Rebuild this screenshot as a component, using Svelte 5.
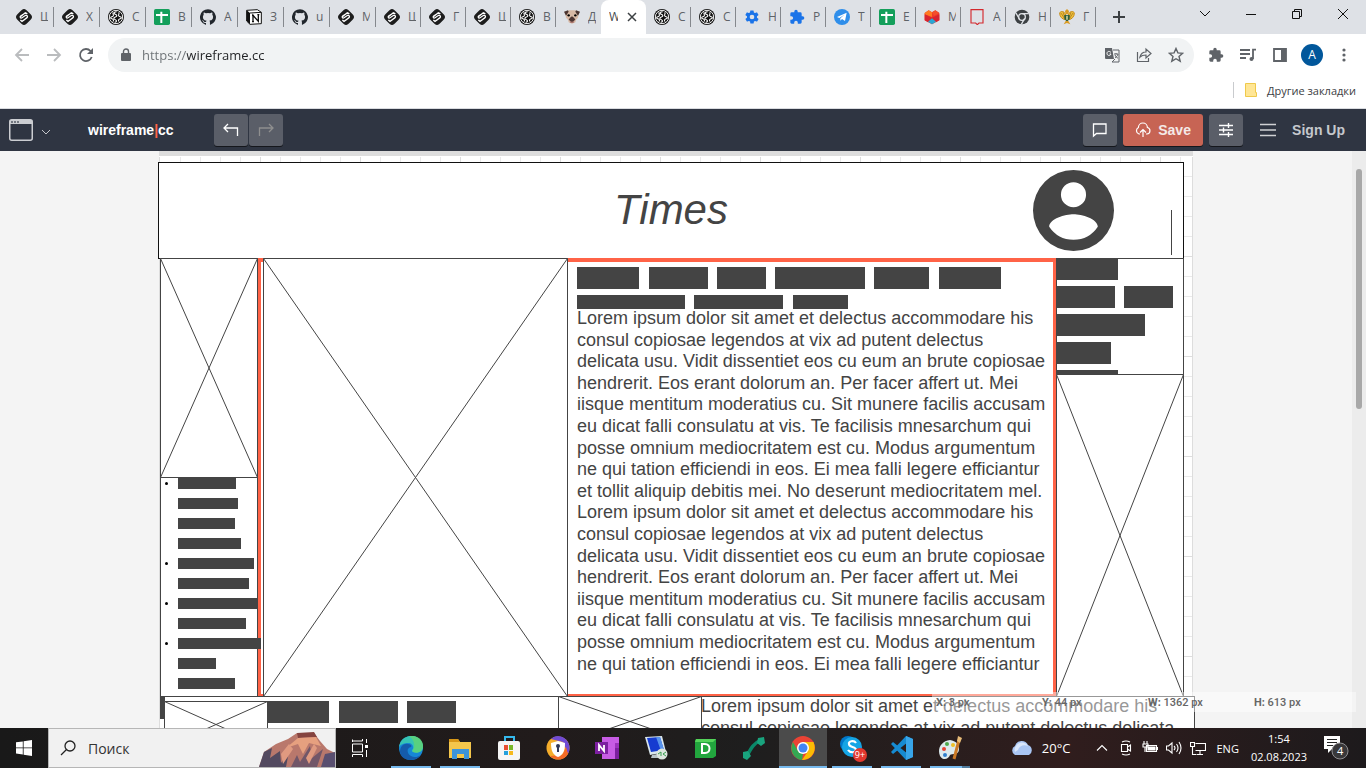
<script>
  const glyphs = {
    s: '<rect x="2" y="2" width="20" height="20" rx="6" transform="rotate(45 12 12)" fill="#1d1d1d"/><path d="M17 7.500l-2.500-2L7 10.500c-1.500 1.500-.5 3.500 1.500 3l6-4c2.500-.5 3.500 2 2 3.500l-7.500 5.500L6.500 16.500M6 12l8-6.500M9.500 18.500l8-6.500" fill="none" stroke="#fff" stroke-width="1.900"/>',
    brain: '<circle cx="12" cy="12" r="12" fill="#111"/><circle cx="12" cy="12" r="10" fill="none" stroke="#fff" stroke-width="1.400"/><path d="M13 4c-4 0-5 3-2 4s3 3 0 4-3 3 0 4 2 4-1 4M8 5c-2 2 1 3 0 5s-4 1-4 3 3 1 4 3-1 2 0 3M16 5c2 2-1 3 0 5s4 1 4 3-3 1-4 3 1 2 0 3" fill="none" stroke="#fff" stroke-width="1.600"/>',
    sheet: '<rect width="24" height="24" rx="2.500" fill="#149f5b"/><path d="M3 9h18M11 4v17" stroke="#fff" stroke-width="3"/>',
    git: '<path fill="#22272d" d="M12 .3a12 12 0 0 0-3.800 23.400c.6.100.8-.3.800-.6v-2.200c-3.300.7-4-1.400-4-1.400-.6-1.400-1.400-1.800-1.400-1.800-1-.7.100-.7.100-.7 1.200.100 1.900 1.200 1.900 1.200 1 1.800 2.800 1.300 3.500 1 .1-.8.400-1.300.8-1.600-2.700-.3-5.500-1.300-5.500-5.900 0-1.300.5-2.400 1.200-3.200-.1-.3-.5-1.500.100-3.200 0 0 1-.3 3.300 1.200a11.500 11.500 0 0 1 6 0c2.300-1.500 3.300-1.200 3.300-1.200.7 1.700.2 2.900.1 3.200.8.8 1.200 1.900 1.200 3.200 0 4.600-2.800 5.600-5.500 5.900.4.400.8 1.100.8 2.200v3.300c0 .3.200.7.800.6A12 12 0 0 0 12 .3"/>',
    notion: '<path d="M1 2l16-1 6 4v17l-17 1-5-5z" fill="#fff" stroke="#111" stroke-width="1.500"/><path d="M1 2l5 4v17l-5-5z" fill="#111"/><path d="M6 6l17-1" stroke="#111" stroke-width="1.500"/><path d="M10.500 19V9.500l8 9V8.500M9 9.500h3M17 8.500h3M9 19h3" fill="none" stroke="#111" stroke-width="2"/>',
    pug: '<path d="M2 4l6-2h8l6 2-1 9-3 3-1 4-5 2-5-2-1-4-3-3z" fill="#d7b9a5"/><path d="M0 4l6-2 1 2-4 6zM24 4l-6-2-1 2 4 6z" fill="#4b342f"/><path d="M9 13l3-2 3 2 2 3-5 4-5-4z" fill="#4d3633"/><circle cx="7" cy="9.500" r="1.800"/><circle cx="17" cy="9.500" r="1.800"/><path d="M9 19q3 2 6 0" stroke="#ad7770" stroke-width="2"/>',
    gear: '<path fill="#1a73e8" d="M19.400 13c.1-.3.100-.7.100-1s0-.7-.1-1l2.100-1.600c.2-.1.200-.4.100-.6l-2-3.500c-.1-.2-.4-.3-.6-.2l-2.500 1a7 7 0 0 0-1.700-1l-.4-2.600a.5.5 0 0 0-.5-.4h-4c-.2 0-.4.2-.5.400L9 5.100a7 7 0 0 0-1.700 1l-2.500-1c-.2-.1-.5 0-.6.200l-2 3.500c-.1.200 0 .5.1.6L4.500 11a8 8 0 0 0 0 2l-2.100 1.600c-.2.1-.2.400-.1.600l2 3.500c.1.200.4.300.6.200l2.500-1q.8.600 1.700 1l.4 2.600c.1.200.3.400.5.400h4c.2 0 .4-.2.500-.4l.4-2.600q.9-.4 1.700-1l2.500 1c.2.100.5 0 .6-.2l2-3.500c.1-.2.100-.5-.1-.6zM12 15.500a3.500 3.500 0 1 1 0-7 3.500 3.500 0 0 1 0 7"/>',
    puzzleBlue: '<path fill="#1a73e8" d="M20.500 11H19V7a2 2 0 0 0-2-2h-4V3.500a2.500 2.500 0 0 0-5 0V5H4a2 2 0 0 0-2 2v3.800h1.500a2.700 2.700 0 0 1 0 5.400H2V20c0 1.100.9 2 2 2h3.800v-1.500a2.700 2.700 0 0 1 5.400 0V22H17a2 2 0 0 0 2-2v-4h1.500a2.500 2.500 0 0 0 0-5"/>',
    telegram: '<circle cx="12" cy="12" r="12" fill="#2f8eea"/><path d="M4.500 12L19 5.500 16.500 18l-4.500-3-2.500 2.500V14l6-5.500-7.500 5z" fill="#fff"/>',
    mcube: '<path d="M1 6l6-4 5 3 5-3 6 4v11l-11 6-11-6z" fill="#ef3b28"/><path d="M1 6l6-4 5 3v7L1 8z" fill="#ff7a21"/><path d="M23 6l-6-4-5 3 3 5z" fill="#f3502c"/><path d="M1 8l11 5L23 8v9l-5 3-6-5-6 5-5-3z" fill="#d9242f"/><path d="M6 19l6-5 6 5-6 4z" fill="#2ba7d4"/>',
    bubbleRed: '<path d="M3 1h18v20h-6l-2.500 2.500L10 21H3z" fill="none" stroke="#d3282d" stroke-width="1.700"/>',
    chromeGray: '<circle cx="12" cy="12" r="11" fill="#3c4043"/><circle cx="12" cy="12" r="5" fill="#3c4043" stroke="#dee1e6" stroke-width="2"/><path d="M12 7h10M8 15L3 6M16 14l-5 9" stroke="#dee1e6" stroke-width="2"/>',
    eagle: '<path d="M10 9C8 2 2 3 1 6c0 6 4 9 8 10M14 9c2-7 8-6 9-3 0 6-4 9-8 10" fill="#f0c33d" stroke="#c58a1a" stroke-width="1.500"/><path d="M3 6l5 8M6 5l3 8M21 6l-5 8M18 5l-3 8" stroke="#9d6a17"/><path d="M9 3l3-3 3 3-1 5h-4z" fill="#d99a22"/><path d="M8 9h8v6l-4 4-4-4z" fill="#2b5d3c"/><path d="M12 10v6" stroke="#f4e9ac" stroke-width="2"/><path d="M10 18l-3 5 5-2 5 2-3-5z" fill="#d99a22"/>'
  };
  const tabs = [
    ['s','Ш'],['s','Х'],['brain','С'],['sheet','В'],['git','А'],['notion','З'],['git','u'],['s','М'],['s','Ш'],['s','Г'],['s','Ш'],['brain','В'],['pug','Д'],
    ['active','W'],['brain','С'],['brain','С'],['gear','Н'],['puzzleBlue','Р'],['telegram','Т'],['sheet','Е'],['mcube','М'],['bubbleRed','А'],['chromeGray','Н'],['eagle','Г']
  ];
  const lorem = [
    'Lorem ipsum dolor sit amet et delectus accommodare his','consul copiosae legendos at vix ad putent delectus','delicata usu. Vidit dissentiet eos cu eum an brute copiosae','hendrerit. Eos erant dolorum an. Per facer affert ut. Mei','iisque mentitum moderatius cu. Sit munere facilis accusam','eu dicat falli consulatu at vis. Te facilisis mnesarchum qui','posse omnium mediocritatem est cu. Modus argumentum','ne qui tation efficiendi in eos. Ei mea falli legere efficiantur','et tollit aliquip debitis mei. No deserunt mediocritatem mel.'
  ];
  const article = [...lorem, ...lorem.slice(0, 8)];
  // Canvas items: x, y, width, height relative to the drawing page.
  const headBars = [[418,116,62,22],[490,116,59,22],[558,116,49,22],[616,116,90,22],[715,116,55,22],[780,116,62,22],[418,144,108,14],[535,144,89,14],[634,144,55,14]];
  const sideBars = [[898,108,61,21],[898,135,58,22],[965,135,49,22],[898,163,88,22],[898,191,54,22],[898,219,61,5]];
  const listBars = [58,60,57,63,76,71,80,68,83,38,57];
  const lowBars = [[108,550,62,22],[180,550,59,22],[248,550,49,22]];
  const apps = [
    ['Edge','on','<circle cx="12" cy="12" r="12" fill="#1687d6"/><path d="M0 11C2-3 21-4 24 9c1 7-5 9-10 7-2-1-1-2 0-3 1-3-1-6-5-6-4 0-7 1-9 4" fill="#36c4b4"/><path d="M14 0c7 1 10 5 10 10 0 6-6 8-10 6-1-1 0-2 1-4 1-5-1-9-5-12z" fill="#67d76a" opacity=".7"/><path d="M1 16c0-6 4-9 8-8 3 0 4 2 3 3-5 1-4 7 0 9 3 2 7 1 10-1-6 8-20 6-21-3" fill="#155bab"/>'],
    ['Explorer','on','<path d="M1 3h9l2 3h11v16H1z" fill="#f4c64b"/><path d="M1 3h9l2 3H1z" fill="#d89717"/><path d="M4 13h17v10h-5v-5H9v5H4z" fill="#3d94da"/>'],
    ['Store','','<path d="M8 6V1h9v5" fill="none" stroke="#35b9ed" stroke-width="2"/><rect x="1" y="5" width="22" height="19" rx="2" fill="#f5f5f5"/><path fill="#e84e30" d="M7 9h4v5H7z"/><path fill="#77b82a" d="M12 9h4v5h-4z"/><path fill="#25a0dc" d="M7 15h4v4H7z"/><path fill="#f6b91c" d="M12 15h4v4h-4z"/>'],
    ['Vault','','<circle cx="12" cy="12" r="11.500" fill="#f5ad2b"/><path d="M12 0a12 12 0 0 1 10 18L17 6 5 3c2-2 4-3 7-3" fill="#704bd3"/><path d="M22 18c-4 7-13 7-18 2l12-1 4-8z" fill="#f46b27"/><path d="M5 7l7-2 7 2c0 8-2 12-7 14-5-2-7-6-7-14" fill="#fff"/><circle cx="12" cy="10" r="2" fill="#303758"/><path d="M12 10v6" stroke="#303758" stroke-width="2"/>'],
    ['OneNote','','<path fill="#c75ce5" d="M7 1h17v22H7z"/><path fill="#9b32bd" d="M20 7h4v5h-4z"/><path fill="#7c1fa0" d="M20 12h4v11h-4zM0 6h13v12H0z"/><path d="M4 15V9l5 6V9" fill="none" stroke="#fff" stroke-width="1.800"/>'],
    ['Remote Desktop','','<path d="M1 1l17-1 4 16-16 3z" fill="#d9e6ed"/><path d="M3 2l13-1 4 13-13 2z" fill="#163cd0"/><path d="M12 1l4 0 4 13-3 1z" fill="#5793ec"/><path d="M8 19l6-1 2 4H7z" fill="#b9c4c9"/><circle cx="18" cy="18" r="5.500" fill="#dce5df"/><path d="M14 18l3-2v4M22 16l-3 2 3 2" stroke="#3b9f51" fill="none"/>'],
    ['Database','','<path d="M3 3h20v17l-3 2H2V5z" fill="#22a63e"/><path d="M3 3h20l-3 3H2z" fill="#54d45a"/><path d="M9 8v9h3c6 0 6-9 0-9z" fill="none" stroke="#fff" stroke-width="2"/>'],
    ['Phone','','<path d="M19 4C12 7 9 12 5 20" fill="none" stroke="#0b8869" stroke-width="3.500"/><path d="M16 2l6-1 1 6-4 3-4-3zM1 16l5-1 3 5-4 4-4-2z" fill="#19a47e"/>'],
    ['Chrome','on selected','<circle cx="12" cy="12" r="12" fill="#ea4335"/><path d="M2 6l5 9 5 3-1 6A12 12 0 0 1 2 6" fill="#34a853"/><path d="M12 6h10.500c4 9-2 18-11.500 18l6-9z" fill="#fbbc04"/><circle cx="12" cy="12" r="6" fill="#fff"/><circle cx="12" cy="12" r="4.500" fill="#4285f4"/>'],
    ['Skype','on','<circle cx="8" cy="8" r="8" fill="#0078ca"/><circle cx="12" cy="11" r="10" fill="#15a5e5"/><path d="M16 7c-2-3-8-2-7 1 0 4 7 2 7 6 0 3-6 3-8 0" fill="none" stroke="#fff" stroke-width="2.200"/>'],
    ['Code','on','<path d="M17 0l7 3v18l-7 3L2 8l2-2 15 12V6L4 18l-2-2z" fill="#168bd2"/><path d="M17 0l7 3v18l-7 3z" fill="#38a5e9"/>'],
    ['Paint','on multi','<path d="M12 4C3 5-1 13 2 20c4 6 9 2 10-1 2-2 9 1 9-6 0-5-3-8-9-9" fill="#dce9ed"/><circle cx="6" cy="13" r="2" fill="#e64234"/><circle cx="9" cy="8" r="2" fill="#4ea84d"/><circle cx="15" cy="9" r="2" fill="#eebf26"/><circle cx="7" cy="19" r="2" fill="#307ecb"/><path d="M16 23L21 4" stroke="#cb7925" stroke-width="3"/><path d="M19 5l1-5 4 2-2 5z" fill="#e9bd79"/>']
  ];
  const stats = [['X:','3 px'],['Y:','44 px'],['W:','1362 px'],['H:','613 px']];
  const box = ([x, y, w, h]) => `left:${x}px;top:${y}px;width:${w}px;height:${h}px`;
</script>

{#snippet cross(rect)}
  <svg class="cross" style={box(rect)} viewBox="0 0 {rect[2]} {rect[3]}"><path d="M.5 .5H{rect[2] - .5}V{rect[3] - .5}H.5ZL{rect[2] - .5} {rect[3] - .5}M{rect[2] - .5} .5L.5 {rect[3] - .5}" /></svg>
{/snippet}

<div class="screen">
  <header class="tabstrip">
    <nav class="tabs" aria-label="Tabs">
      {#each tabs as [icon, label], i}
        <button class="tab" class:wide={i < 8} class:active={icon === 'active'} class:plain={i === 12}>
          {#if icon === 'active'}
            <span class="letter">{label}</span><svg class="x" viewBox="0 0 10 10"><path d="M1 1l8 8M9 1L1 9" /></svg>
          {:else}
            <svg class="fav" viewBox="0 0 24 24">{@html glyphs[icon]}</svg><span class="letter">{label}</span>
          {/if}
        </button>
      {/each}
      <button class="newtab" aria-label="New tab"><svg viewBox="0 0 12 12"><path d="M6 0v12M0 6h12" /></svg></button>
    </nav>
    <div class="winbtns">
      <button aria-label="Search tabs"><svg viewBox="0 0 12 12"><path d="M1 3l5 5 5-5" /></svg></button>
      <button aria-label="Minimize"><svg viewBox="0 0 12 12"><path d="M1 6.500h10" /></svg></button>
      <button aria-label="Restore"><svg viewBox="0 0 12 12"><path d="M1.500 3.500h7v7h-7zM3.500 3.500v-2h7v7h-2" /></svg></button>
      <button aria-label="Close"><svg viewBox="0 0 12 12"><path d="M1 1l10 10M11 1L1 11" /></svg></button>
    </div>
  </header>

  <div class="toolbar">
    <button class="tool off" aria-label="Back"><svg viewBox="0 0 16 16"><path d="M15 8H2M8 2L2 8l6 6" /></svg></button>
    <button class="tool off" aria-label="Forward"><svg viewBox="0 0 16 16"><path d="M1 8h13M8 2l6 6-6 6" /></svg></button>
    <button class="tool reload" aria-label="Reload"><svg viewBox="0 0 16 16"><path d="M13.700 10A6 6 0 1 1 12.500 4L13.500 5" /><path d="M15 1v6H9z" fill="#5f6368" stroke="none" /></svg></button>
    <div class="omni">
      <svg class="lock" viewBox="0 0 10 14"><path d="M1 5h8a1 1 0 0 1 1 1v6a1 1 0 0 1-1 1H1a1 1 0 0 1-1-1V6a1 1 0 0 1 1-1" fill="#5f6368" /><path d="M2.500 6V3.500a2.500 2.500 0 0 1 5 0V6" fill="none" stroke="#5f6368" stroke-width="1.400" /></svg>
      <input class="url" aria-label="Address" value="https://wireframe.cc" />
      <button class="tool" aria-label="Translate"><svg viewBox="0 0 16 16"><path d="M1 1h7l2 11H2a1 1 0 0 1-1-1z" fill="#5f6368" stroke="none" /><path d="M9 3h6v12H8l3-3M10 7h4M12 6v1M14 7c0 2-2 3-3 4M11 8c1 2 2 3 3 3" stroke-width="1" /><path d="M7 5.500c-2-2-4-1-4 1s3 3 4 .5H5.500" stroke="#fff" stroke-width="1" /></svg></button>
      <button class="tool" aria-label="Share"><svg viewBox="0 0 16 16"><path d="M1.500 5v9.500h11V11M4 10c1-4 3-5 6-5V2l5 4.500-5 4.500V8c-3 0-5 1-6 2z" stroke-width="1.200" /></svg></button>
      <button class="tool" aria-label="Bookmark"><svg viewBox="0 0 16 16"><path d="M8 1.500l1.900 4.400 4.800.4-3.700 3.200 1.200 4.700L8 11.700l-4.200 2.500L5 9.500 1.300 6.300l4.800-.4z" stroke-width="1.400" /></svg></button>
    </div>
    <button class="tool" aria-label="Extensions"><svg viewBox="0 0 24 24"><path fill="#5f6368" stroke="none" d="M20.500 11H19V7a2 2 0 0 0-2-2h-4V3.500a2.500 2.500 0 0 0-5 0V5H4a2 2 0 0 0-2 2v3.800h1.500a2.700 2.700 0 0 1 0 5.400H2V20c0 1.100.9 2 2 2h3.800v-1.500a2.700 2.700 0 0 1 5.400 0V22H17a2 2 0 0 0 2-2v-4h1.500a2.500 2.500 0 0 0 0-5" /></svg></button>
    <button class="tool" aria-label="Media"><svg viewBox="0 0 16 16"><path d="M0 3h10M0 7h10M0 11h6M13 12V2.700h3" /><circle cx="11.500" cy="12" r="2" fill="#5f6368" stroke="none" /></svg></button>
    <button class="tool" aria-label="Side panel"><svg viewBox="0 0 16 16"><path d="M2 2h12v12H2z" /><path d="M9 2h5v12H9z" fill="#5f6368" stroke="none" /></svg></button>
    <button class="tool" aria-label="Profile"><span class="avatar">A</span></button>
    <button class="tool" aria-label="Menu"><svg viewBox="0 0 16 16"><g fill="#5f6368" stroke="none"><circle cx="8" cy="3" r="1.600" /><circle cx="8" cy="8" r="1.600" /><circle cx="8" cy="13" r="1.600" /></g></svg></button>
  </div>
  <div class="bookmarks"><button><svg viewBox="0 0 12 14"><path d="M.5 .5h10v9h1v4h-11z" fill="#ffe695" stroke="#efc94b" /></svg>Другие закладки</button></div>

  <div class="appbar">
    <button class="frame" aria-label="Frame size"><svg class="win" viewBox="0 0 24 22"><rect x=".75" y=".75" width="22.500" height="20.500" rx="2" fill="none" stroke="#cbcdd1" stroke-width="1.500" /><path d="M1 1h22v4H1z" fill="#cbcdd1" /><path d="M2 3h8" stroke="#555b66" stroke-width="1.500" stroke-dasharray="2 1" /></svg><svg class="caret" viewBox="0 0 10 6"><path d="M1 1l4 4 4-4" fill="none" stroke="#c5c7cb" /></svg></button>
    <a class="brand" href="#home">wireframe<i>|</i>cc</a>
    <div class="history">
      <button class="dark" aria-label="Undo"><svg viewBox="0 0 16 14"><path d="M5 1L1 5l4 4M1 5h13.500v8" fill="none" stroke="#fff" stroke-width="1.300" /></svg></button>
      <button class="dark faded" aria-label="Redo"><svg viewBox="0 0 16 14"><path d="M11 1l4 4-4 4M15 5H1.500v8" fill="none" stroke="#8f8f8f" stroke-width="1.300" /></svg></button>
    </div>
    <div class="actions">
      <button class="dark" aria-label="Comments"><svg viewBox="0 0 16 14"><path d="M1.500 1h12.500v9.500H4.500L1.500 13z" fill="none" stroke="#fff" stroke-width="1.300" /></svg></button>
      <button class="dark save"><svg viewBox="0 0 16 14"><path d="M5 11H4a3.500 3.500 0 0 1-.6-6.500 4.500 4.500 0 0 1 9 0A3.300 3.300 0 0 1 12 11h-1M8 14V7M5 9.500l3-3 3 3" fill="none" stroke="#fff" stroke-width="1.200" /></svg>Save</button>
      <button class="dark" aria-label="Settings"><svg viewBox="0 0 16 16"><path d="M1 3.500h14M1 8h14M1 12.500h14M10.500 1v5M5.500 5.500v5M10.500 10v5" fill="none" stroke="#fff" stroke-width="1.400" /></svg></button>
      <button class="burger" aria-label="Menu"><svg viewBox="0 0 16 14"><path d="M0 1.500h16M0 7h16M0 12.500h16" stroke="#d0d1d4" stroke-width="1.300" /></svg></button>
      <a href="#signup">Sign Up</a>
    </div>
  </div>

  <main class="workspace">
    <div class="stage">
      <div class="grid"></div>
      <div class="item masthead" style={box([-1,11,1026,97])}><span>Times</span></div>
      <svg class="person" style={box([874,19,81,81])} viewBox="0 0 20 20"><path fill="#444" fill-rule="evenodd" d="M10 0a10 10 0 1 0 0 20 10 10 0 0 0 0-20m0 3a3 3 0 1 1 0 6.200A3 3 0 0 1 10 3m0 14.200a7.200 7.200 0 0 1-6-3.200c0-2 4-3.100 6-3.100s6 1.100 6 3.100a7.200 7.200 0 0 1-6 3.200" /></svg>
      <div class="bar" style={box([1012,59,1,45])}></div>

      <div class="item alert" style={box([98,107,800,440])}></div>
      <div class="item thin" style={box([1,107,98,439])}></div>
      {@render cross([1,107,98,220])}
      {@render cross([104,107,305,439])}
      <ul class="list" style={box([6,327,98,220])}>
        {#each listBars as w, i}<li class:dot={[0,4,6,8].includes(i)}><span style="width:{w}px"></span></li>{/each}
      </ul>
      {#each headBars as b}<div class="bar" style={box(b)}></div>{/each}
      <p class="copy" style="left:418px;top:157px">{article.join('\n')}</p>

      <div class="item thin" style={box([897,107,128,439])}></div>
      {#each sideBars as b}<div class="bar" style={box(b)}></div>{/each}
      {@render cross([897,223,128,323])}

      <div class="bar" style={box([1,546,5,22])}></div>
      <div class="item thin" style={box([5,545,1031,220])}></div>
      {@render cross([5,550,104,47])}
      {#each lowBars as b}<div class="bar" style={box(b)}></div>{/each}
      {@render cross([399,545,144,51])}
      <p class="copy" style="left:542px;top:545px">{lorem[0] + '\n' + lorem[1] + ' delicata'}</p>
    </div>
    <div class="scroll"><div class="thumb"></div></div>
    <div class="stats">{#each stats as [k, v]}<span><b>{k}</b> {v}</span>{/each}</div>
  </main>

  <footer class="taskbar">
    <button class="start" aria-label="Start"><svg viewBox="0 0 16 16"><path fill="#fff" d="M0 2.300l6.800-.9v6.100H0zM7.600 1.300L16 0v7.500H7.600zM0 8.300h6.800v6.200L0 13.600zM7.600 8.300H16V16l-8.400-1.200z" /></svg></button>
    <label class="search">
      <svg class="mag" viewBox="0 0 16 16"><circle cx="10" cy="6" r="5" /><path d="M6.500 9.500L1 15" /></svg>
      <input placeholder="Поиск" aria-label="Поиск" />
      <svg class="hill" viewBox="0 0 76 36"><path d="M0 36l5-15 12-8 12-5 9-6h17l6 8 7 8 8 4v14z" fill="#b9786c" /><path d="M38 2l17-1 3 5-19 1z" fill="#854440" /><path d="M39 7l18-1 5 9-12-3-6 11-5-10-12 4z" fill="#e6a07f" /><path d="M5 21l8-4-2 10 10-7 1 12 8-12-3 16H0z" fill="#534a60" /><path d="M32 36l6-12 3 7 10-16 2 12 11-9-6 18z" fill="#715668" /><path d="M62 36l4-13 10-2v15z" fill="#594f70" /><path d="M22 23l8-10 4 5-10 15zM47 27l8-14 3 4-8 16z" fill="#e09a80" /></svg>
    </label>
    <button class="view" aria-label="Task view"><svg viewBox="0 0 17 18"><path d="M.5 5h10v8H.5zM.5 3V.5M.5 2h10V0M.5 18v-2.500h10V18M14.500 0v4M14.500 11v7" fill="none" stroke="#fff" /><path d="M13 6h3v3h-3z" fill="#fff" /></svg></button>
    <div class="apps">
      {#each apps as [name, state, art]}
        <button class="app {state}" aria-label={name}><svg viewBox="0 0 24 24">{@html art}</svg>{#if name === 'Skype'}<span class="badge">9+</span>{/if}</button>
      {/each}
    </div>
    <div class="weather"><svg viewBox="0 0 24 16"><path d="M5 15a5 5 0 0 1 0-9 7 7 0 0 1 13-1 5.500 5.500 0 0 1 1 10z" fill="#a9c5f3" /><path d="M5 12a6 6 0 0 1 1-6 7 7 0 0 1 12 0c-4-2-9 0-10 4z" fill="#d9e6fb" /></svg>20°C</div>
    <div class="tray">
      <svg viewBox="0 0 16 16"><path d="M3 10.500l5-5 5 5" /></svg>
      <svg viewBox="0 0 16 16"><path d="M3.500 4.500h6v7h-6zM9.500 7l3-2v6l-3-2M4 2q4-2 8 0M4 14q4 2 8 0" /></svg>
      <svg viewBox="0 0 16 16"><path d="M4.500 5.500h10v6h-10zM15.500 7v3M2 1v3M5 1v3M1 4h5v3H1zM3 7v5" /><path d="M6 7h7v3H6z" fill="#fff" /></svg>
      <svg viewBox="0 0 16 16"><path d="M.5 6h2L6 3v10l-3.500-3h-2zM8 6q2 2 0 4M10.500 4q3 4 0 8M13 2q4 6 0 12" /></svg>
      <svg viewBox="0 0 16 16"><path d="M5.500 3.500h10v7h-10M10 11v3M7 14.500h6M.5 2.500h4v4h-4zM2.500 6.500v8h4" /></svg>
      <span>ENG</span>
    </div>
    <div class="clock"><span>1:54</span><span>02.08.2023</span></div>
    <button class="note" aria-label="Notifications"><svg viewBox="0 0 26 26"><path d="M0 1h16v13H8l-4 4v-4H0z" fill="#fff" /><path d="M3 4.500h10M3 7.500h10M3 10.500h6" stroke="#222" /><circle cx="16" cy="16" r="8" fill="#39383a" stroke="#8e8d90" /></svg><span>4</span></button>
  </footer>
</div>

<style>
  :global(body) { margin: 0; overflow: hidden; }
  * { box-sizing: border-box; }
  button { border: 0; padding: 0; margin: 0; background: none; font: inherit; color: inherit; display: flex; align-items: center; justify-content: center; }
  a { text-decoration: none; }
  svg { display: block; flex: none; }
  .screen { height: 100vh; display: flex; flex-direction: column; background: #fff; font: 12px "Open Sans", "Noto Sans", sans-serif; color: #3c4043; }
  .tabstrip { flex: none; height: 34px; display: flex; justify-content: space-between; background: #dee1e6; padding-left: 8px; }
  .tabs { display: flex; }
  .tab { position: relative; width: 45px; height: 34px; justify-content: flex-start; padding-left: 8px; gap: 8px; }
  .wide { width: 46px; }
  .tab::after { content: ""; position: absolute; right: 0; top: 7px; width: 1px; height: 20px; background: #85888d; }
  .active::after, .plain::after { display: none; }
  .fav { width: 16px; height: 16px; }
  .letter { width: 8px; overflow: hidden; text-align: left; color: #5f6368; line-height: 16px; }
  .active { background: #fff; border-radius: 8px 8px 0 0; gap: 9px; }
  .active .letter { width: 9px; color: #45494d; }
  .x { width: 10px; height: 10px; fill: none; stroke: #3c4043; stroke-width: 1.500; }
  .newtab { width: 46px; height: 34px; }
  .newtab svg { width: 12px; height: 12px; stroke: #3c4043; stroke-width: 2; }
  .winbtns { display: flex; height: 28px; }
  .winbtns button { width: 46px; }
  .winbtns svg { width: 12px; height: 12px; fill: none; stroke: #111; }
  .toolbar { flex: none; height: 42px; display: flex; align-items: center; padding: 0 6px; }
  .tool { width: 32px; height: 32px; flex: none; }
  .tool svg { width: 16px; height: 16px; fill: none; stroke: #5f6368; stroke-width: 1.800; }
  .off svg { stroke: #babcbe; }
  .omni { flex: 1; margin: 0 6px; height: 34px; border-radius: 17px; background: #f1f3f4; display: flex; align-items: center; padding: 0 2px 0 13px; }
  .lock { width: 10px; height: 14px; }
  .url { flex: 1; min-width: 0; border: 0; padding: 0; margin-left: 11px; outline: 0; font: 13px "Open Sans", sans-serif; color: transparent; background: linear-gradient(90deg, #6b7074 45px, #202124 45px); -webkit-background-clip: text; background-clip: text; }
  .avatar { width: 22px; height: 22px; border-radius: 50%; background: #01579b; color: #fff; line-height: 22px; text-align: center; }
  .bookmarks { flex: none; height: 33px; border-bottom: 1px solid #dadce0; display: flex; justify-content: flex-end; align-items: center; padding: 0 10px 4px 0; font-size: 11px; }
  .bookmarks button { gap: 10px; padding-left: 11px; border-left: 1px solid #c9cbce; height: 16px; }
  .bookmarks svg { width: 12px; height: 14px; }
  .appbar { flex: none; height: 42px; background: #2f3542; display: flex; align-items: center; padding: 0 21px 0 9px; font: bold 14px "Liberation Sans", Arial, sans-serif; }
  .frame { gap: 8px; margin-right: 37px; }
  .win { width: 24px; height: 22px; }
  .caret { width: 10px; height: 6px; margin-top: 3px; }
  .brand { color: #fff; width: 126px; }
  .brand i { color: #ff6347; font-style: normal; }
  .history { display: flex; gap: 1px; }
  .dark { width: 34px; height: 32px; border-radius: 3px; background: #5a5e68; box-shadow: 0 1px #15171c; color: #f4e9e7; }
  .dark svg { width: 16px; height: 16px; }
  .actions { margin-left: auto; display: flex; align-items: center; gap: 6px; }
  .save { width: 80px; background: #c76454; gap: 7px; }
  .burger { width: 16px; margin: 0 10px 0 11px; }
  .burger svg { width: 16px; height: 14px; }
  .actions a { color: #c5c8cd; }
  .workspace { flex: 1; min-height: 0; position: relative; display: flex; overflow: hidden; background: #f4f4f4; font-family: "Liberation Sans", Arial, sans-serif; }
  .stage { position: relative; width: 1034px; margin: 0 auto; background: #fff; border-top: 5px solid #ddd; }
  .stage > * { margin-top: -5px; }
  .stage > .grid { position: absolute; inset: 1px 0 0; margin: 0; border: solid #ddd; border-width: 0 1px;
    background: repeating-linear-gradient(90deg, transparent 0 99px, #ddd 99px 100px) 1px 0, repeating-linear-gradient(transparent 0 99px, #ddd 99px 100px), repeating-linear-gradient(90deg, transparent 0 19px, #eaeaea 19px 20px) 1px 0, repeating-linear-gradient(transparent 0 19px, #eaeaea 19px 20px); }
  .item { position: absolute; background: #fff; border: 1px solid #111; }
  .masthead { display: flex; align-items: center; justify-content: center; padding-bottom: 2px; font: italic 42px "Liberation Sans", Arial, sans-serif; color: #444; }
  .alert { border: 4px solid #ff6347; }
  .thin { border-color: #444; }
  .cross { position: absolute; fill: #fff; stroke: #444; stroke-width: 1; overflow: hidden; }
  .person, .bar { position: absolute; }
  .bar { background: #444; }
  .list { position: absolute; list-style: none; margin-bottom: 0; padding: 0; }
  .list li { height: 20px; padding-left: 13px; position: relative; }
  .list li span { display: block; height: 11px; background: #444; }
  .dot::before { content: ""; position: absolute; left: 0; top: 4px; width: 3px; height: 3px; border-radius: 50%; background: #000; }
  .copy { position: absolute; margin-bottom: 0; white-space: pre; font-size: 18px; line-height: 1.2; color: #444; }
  .scroll { width: 14px; background: #ececec; padding: 18px 4px 0; }
  .thumb { height: 240px; border-radius: 3px; background: #a8a8a8; }
  .stats { position: absolute; right: 10px; bottom: 16px; height: 20px; display: flex; padding-left: 4px; background: rgba(255,255,255,.45); font: 500 11px/22px Roboto, Arial, sans-serif; color: #666; }
  .stats span { width: 106px; white-space: nowrap; }
  .stats span:last-child { width: 102px; }
  .taskbar { flex: none; height: 40px; display: flex; align-items: center; background: linear-gradient(90deg, #191919, #211b1b 40%, #1e1e1e 55%, #301d1d 78%, #1d1a1c); color: #fff; }
  .start { width: 48px; height: 40px; }
  .start svg { width: 16px; height: 16px; }
  .search { width: 288px; height: 40px; display: flex; align-items: center; background: #f1f1f1; border: 1px solid #b6b6b6; padding-left: 11px; }
  .mag { width: 16px; height: 16px; fill: none; stroke: #222; stroke-width: 1.300; }
  .search input { flex: 1; min-width: 0; margin-left: 12px; padding: 0; border: 0; background: none; font: 14px "Open Sans", sans-serif; }
  .search input::placeholder { color: #333; opacity: 1; }
  .hill { width: 76px; height: 36px; align-self: flex-end; }
  .view { width: 48px; height: 40px; }
  .view svg { width: 17px; height: 18px; }
  .apps { display: flex; gap: 1px; margin-left: 3px; }
  .app { width: 48px; height: 40px; position: relative; }
  .app svg { width: 24px; height: 24px; }
  .on::after { content: ""; position: absolute; left: 4px; right: 4px; bottom: 0; height: 2px; background: #76b9ed; }
  .selected { background: #4b4b4b; }
  .selected::after { left: 0; right: 0; }
  .multi::after { background: linear-gradient(90deg, #76b9ed 32px, #507b9c 32px); }
  .badge { position: absolute; left: 25px; top: 20px; width: 14px; height: 14px; border-radius: 50%; background: #e2382f; font-size: 9px; line-height: 14px; }
  .weather { margin-left: auto; display: flex; align-items: center; gap: 8px; font-size: 13px; }
  .weather svg { width: 24px; height: 16px; }
  .tray { display: flex; align-items: center; gap: 8px; margin-left: 24px; }
  .tray svg { width: 16px; height: 16px; fill: none; stroke: #fff; stroke-width: 1.100; }
  .tray span { margin-left: 2px; font-size: 11px; }
  .clock { display: flex; flex-direction: column; align-items: center; line-height: 18px; font-size: 11px; margin-left: 12px; }
  .note { position: relative; width: 26px; height: 26px; margin: 0 16px 0 17px; }
  .note svg { width: 26px; height: 26px; }
  .note span { position: absolute; left: 13px; top: 8px; font-size: 11px; line-height: 16px; }
</style>
